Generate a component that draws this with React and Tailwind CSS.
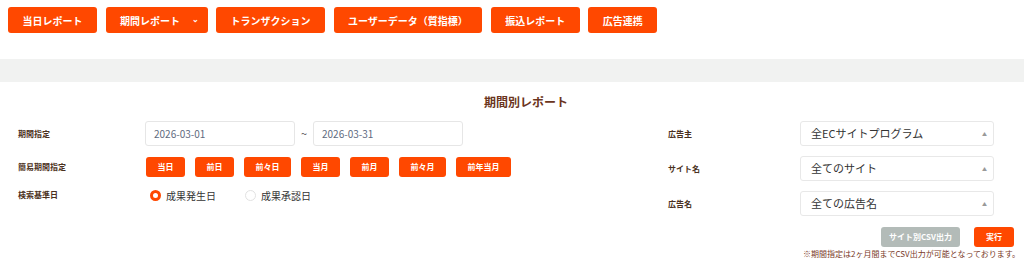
import React, { useState } from "react";

const topButtons = ["当日レポート", "期間レポート", "トランザクション", "ユーザーデータ（質指標）", "振込レポート", "広告連携"];
const quick = ["当日", "前日", "前々日", "当月", "前月", "前々月", "前年当月"];

const font = { fontFamily: '"Noto Sans CJK JP", "Noto Sans", sans-serif' };

const Select = ({ value }) => (
  <div className="w-[194px] h-[25px] border border-[#e8e8e8] rounded-[3px] bg-white flex items-center justify-between pl-[10px] pr-[6px]">
    <span className="text-[11px] text-[#333]">{value}</span>
    <span className="text-[5px] text-[#999]">▲</span>
  </div>
);

const Radio = ({ checked, label, onClick, className }) => (
  <label className={`flex items-center gap-[5px] cursor-pointer ${className}`} onClick={onClick}>
    <span
      className={`w-[11px] h-[11px] rounded-full bg-white ${
        checked ? "border-[3px] border-[#ff4800]" : "border border-[#e2e2e2]"
      }`}
    ></span>
    <span className="text-[10px] text-[#333]">{label}</span>
  </label>
);

const App = () => {
  const [basis, setBasis] = useState("occur");

  return (
    <div className="w-[1024px] h-[267px] bg-white overflow-hidden" style={font}>
      {/* top nav buttons */}
      <div className="flex gap-[8.5px] pl-[8px] pt-[7px] h-[59px]">
        {topButtons.map((b, i) => (
          <button
            key={b}
            className={`h-[26px] rounded-[3px] bg-[#ff4800] text-white text-[10px] font-bold flex items-center justify-center ${
              i === 1 ? "pl-[14.5px] pr-[8.5px] gap-[12px]" : "px-[14.5px]"
            }`}
          >
            {b}
            {i === 1 && <span className="text-[8px] leading-none -mt-[3px]">⌄</span>}
          </button>
        ))}
      </div>

      <div className="h-[23px] bg-[#f1f2f1]"></div>

      <div className="pt-[12px] pl-[28px] text-center text-[12px] font-semibold text-[#6b3520] leading-[16px]">期間別レポート</div>

      <div className="flex pl-[18px] pr-[10px] mt-[11px]">
        {/* left */}
        <div className="w-[650px]">
          <div className="flex items-center h-[25px]">
            <div className="w-[127px] text-[8px] font-bold text-[#4a3020]">期間指定</div>
            <div className="w-[150px] h-[25px] border border-[#e6e6e6] rounded-[3px] flex items-center pl-[8px] text-[10px] text-[#5f6b80]">2026-03-01</div>
            <span className="w-[18px] text-center text-[11px] text-[#555]">~</span>
            <div className="w-[150px] h-[25px] border border-[#e6e6e6] rounded-[3px] flex items-center pl-[8px] text-[10px] text-[#5f6b80]">2026-03-31</div>
          </div>
          <div className="flex items-center mt-[11px] h-[20px]">
            <div className="w-[128px] text-[8px] font-bold text-[#4a3020]">簡易期間指定</div>
            <div className="flex gap-[10px]">
              {quick.map((q) => (
                <button key={q} className="h-[20px] px-[11.5px] rounded-[3px] bg-[#ff4800] text-white text-[8px] font-bold">
                  {q}
                </button>
              ))}
            </div>
          </div>
          <div className="flex items-center mt-[10px] h-[16px]">
            <div className="w-[127px] text-[8px] font-bold text-[#4a3020]">検索基準日</div>
            <Radio className="ml-[5px] w-[95px]" checked={basis === "occur"} label="成果発生日" onClick={() => setBasis("occur")} />
            <Radio checked={basis === "approve"} label="成果承認日" onClick={() => setBasis("approve")} />
          </div>
        </div>

        {/* right */}
        <div className="flex-1">
          <div className="flex items-center h-[25px]">
            <div className="w-[132px] text-[8px] font-bold text-[#4a3020]">広告主</div>
            <Select value="全ECサイトプログラム" />
          </div>
          <div className="flex items-center h-[25px] mt-[10px]">
            <div className="w-[132px] text-[8px] font-bold text-[#4a3020]">サイト名</div>
            <Select value="全てのサイト" />
          </div>
          <div className="flex items-center h-[25px] mt-[10px]">
            <div className="w-[132px] text-[8px] font-bold text-[#4a3020]">広告名</div>
            <Select value="全ての広告名" />
          </div>
          <div className="flex justify-end gap-[14px] mt-[11px]">
            <button className="h-[20px] px-[8px] rounded-[3px] bg-[#b3bbb8] text-white text-[8px] font-bold">サイト別CSV出力</button>
            <button className="h-[20px] px-[12px] rounded-[3px] bg-[#ff4800] text-white text-[8px] font-bold">実行</button>
          </div>
          <div className="text-right text-[8px] text-[#7a3a28] mt-[1px] -mr-[6px]">※期間指定は2ヶ月間までCSV出力が可能となっております。</div>
        </div>
      </div>
    </div>
  );
};

export default App;
